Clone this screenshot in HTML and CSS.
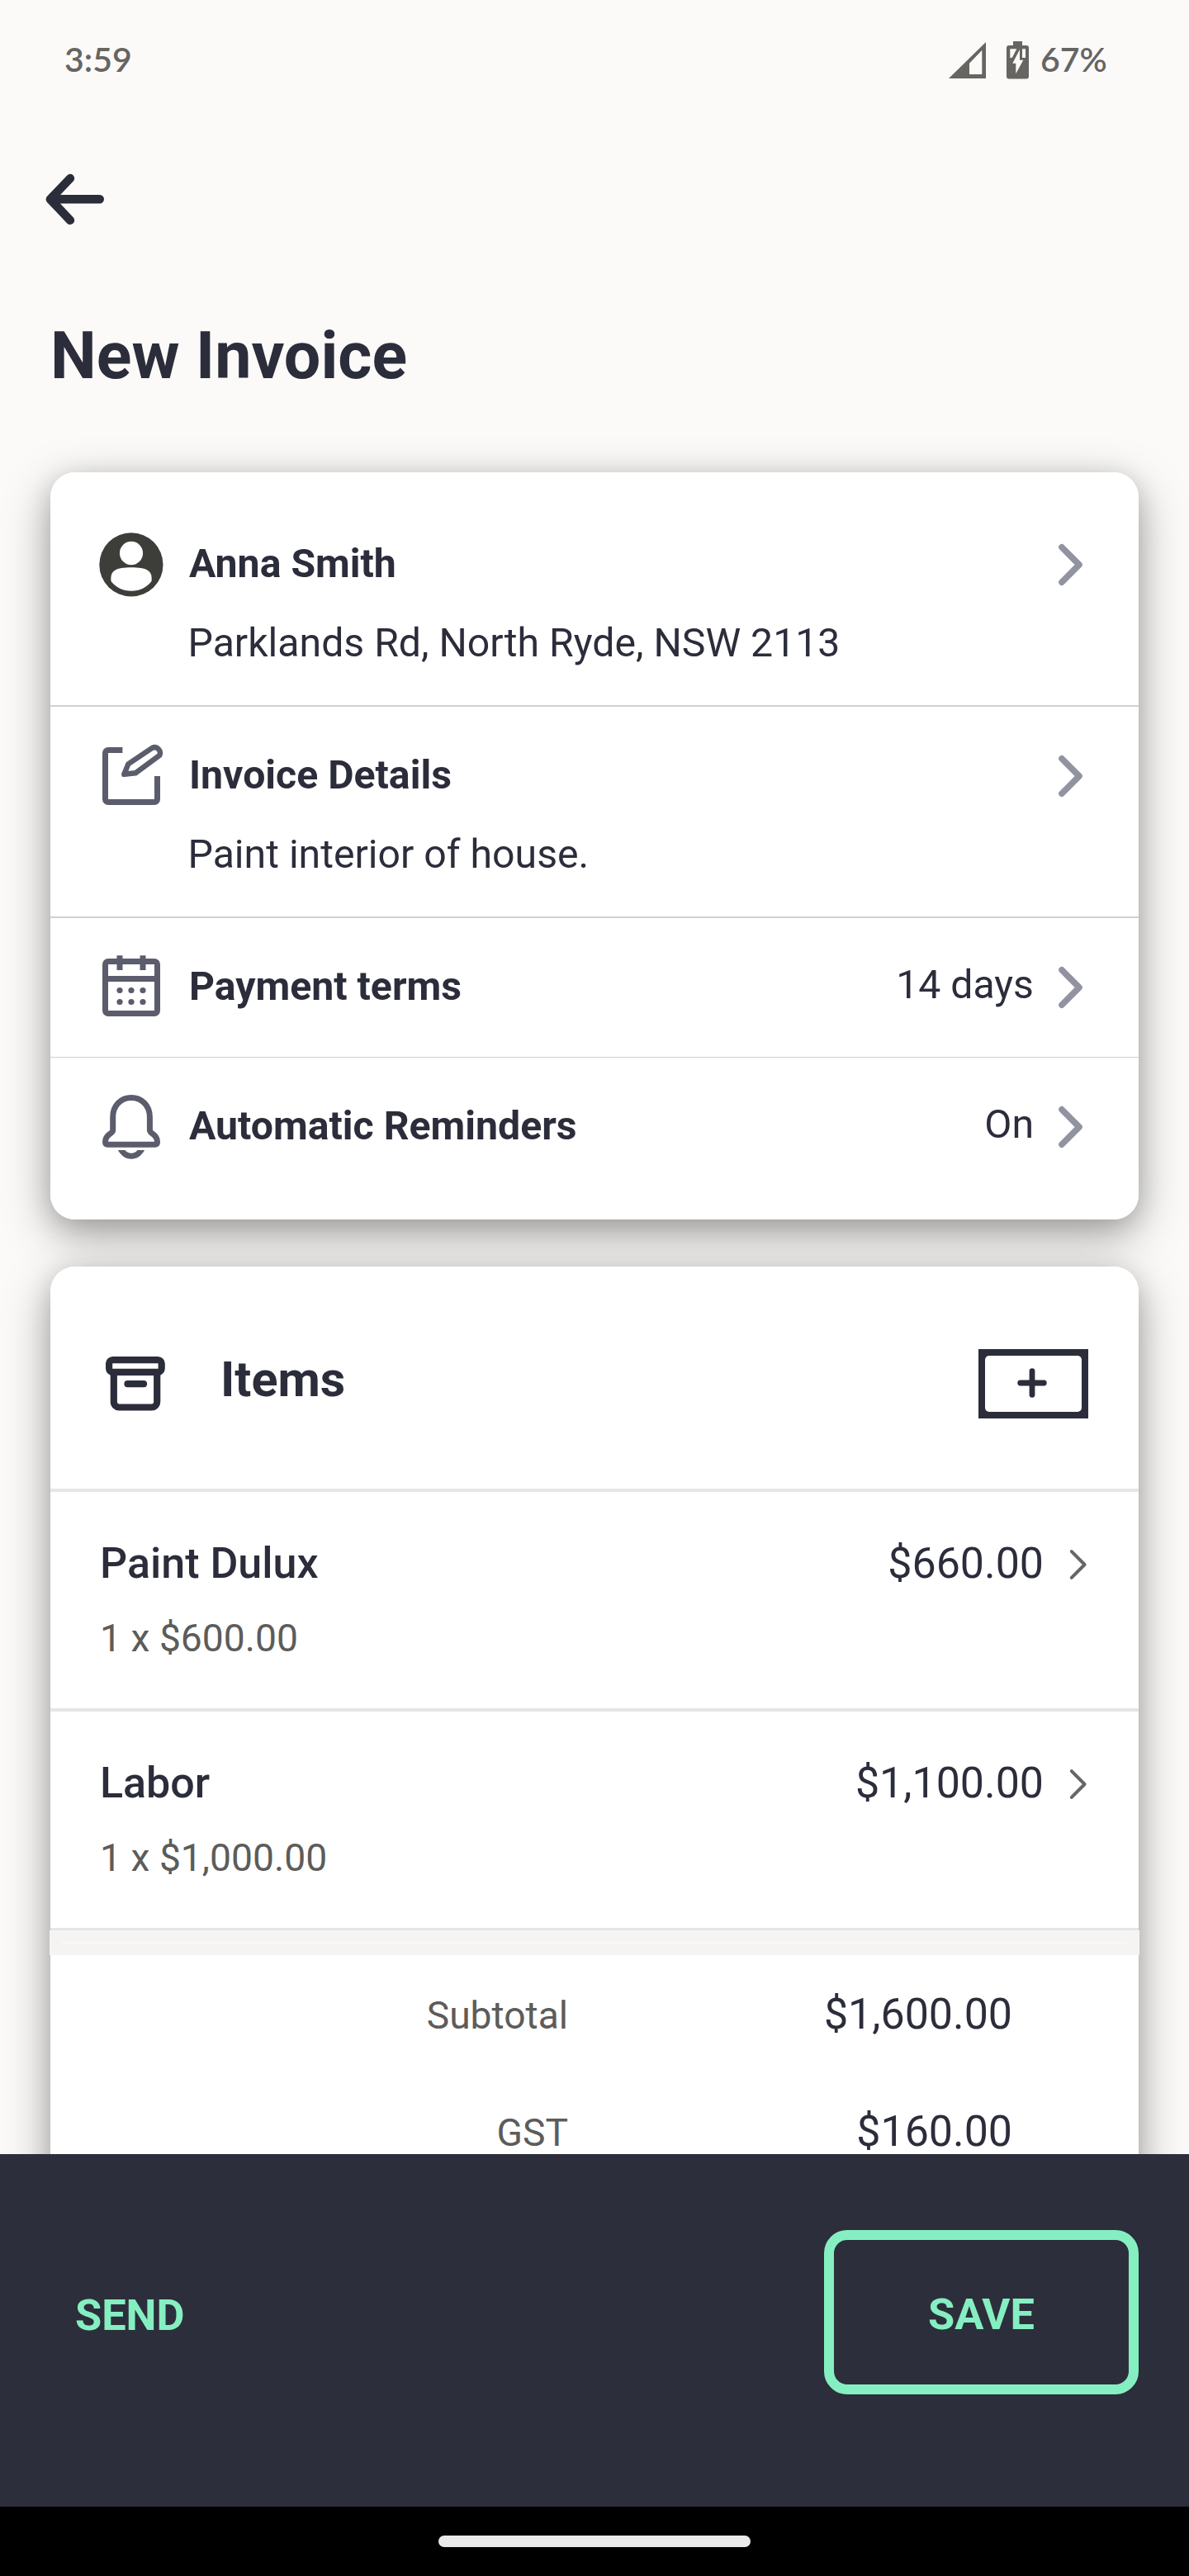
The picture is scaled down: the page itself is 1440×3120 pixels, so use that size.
FILE: index.html
```html
<!DOCTYPE html>
<html lang="en">
<head>
<meta charset="utf-8">
<title>New Invoice</title>
<link rel="stylesheet" href="styles.css">
</head>
<body>
<svg class="defs" width="0" height="0" aria-hidden="true">
  <symbol id="chevron" viewBox="0 0 40 60"><path d="M9 8.8L30 30L9 51.2" fill="none" stroke="#9293a1" stroke-width="7.6" stroke-linecap="round" stroke-linejoin="round"/></symbol>
  <symbol id="chevron-thin" viewBox="0 0 28 44"><path d="M5.8 6.2L21.6 22L5.8 37.8" fill="none" stroke="#666" stroke-width="4" stroke-linecap="round" stroke-linejoin="round"/></symbol>
</svg>
<div class="screen">
  <main class="content">
    <div class="status">
      <span class="clock">3:59</span>
      <div class="status-right">
        <svg class="signal" width="45" height="44" viewBox="0 0 45 44"><path fill="#666562" fill-rule="evenodd" d="M0 44H45V0ZM25 25.7L40.3 9.7V39H25Z"/></svg>
        <svg class="battery" width="28" height="46" viewBox="0 0 28 46"><path fill="#666562" d="M8 0h11v5h5a3 3 0 0 1 3 3v34.500a3 3 0 0 1-3 3H3a3 3 0 0 1-3-3V8a3 3 0 0 1 3-3h5z"/><path fill="#fbfaf8" d="M4.300 9.300H12.300L6.700 20H4.300zM19 9.300h4V20h-4zM16 10V22.700H20.300L11.300 39.300V26.700H7.300z"/></svg>
        <span class="percent">67%</span>
      </div>
    </div>
    <svg class="back" width="80" height="70" viewBox="0 0 80 70"><path d="M69.800 35.300H10M34 10L9.800 35.300L34 60.800" fill="none" stroke="#2c2d3b" stroke-width="10.400" stroke-linecap="round" stroke-linejoin="round"/></svg>
    <h1 class="title">New Invoice</h1>

    <section class="card details">
      <div class="row">
        <svg class="icon" width="80" height="80" viewBox="0 0 80 80"><circle cx="39.900" cy="39.900" r="38.600" fill="#3d3d3a"/><ellipse cx="40" cy="26" rx="14.100" ry="14.300" fill="#fff"/><path fill="#fff" d="M15.500 60C14 47 21.500 43.300 40 43.300S66 47 64.500 60C58.500 67.500 50.500 71.700 40 71.700S21.500 67.500 15.500 60Z"/></svg>
        <div class="text">
          <div class="label">Anna Smith</div>
          <div class="sub">Parklands Rd, North Ryde, NSW 2113</div>
        </div>
        <svg class="chev" width="40" height="60"><use href="#chevron"/></svg>
      </div>
      <div class="row">
        <svg class="icon" width="80" height="80" viewBox="0 0 80 80"><g fill="none" stroke="#5b5c6c" stroke-width="7"><path d="M29.400 8.500H12a3.500 3.500 0 0 0-3.500 3.500V68a3.500 3.500 0 0 0 3.500 3.500H68a3.500 3.500 0 0 0 3.500-3.500V40"/><path stroke-width="6.400" stroke-linejoin="round" d="M31.300 37.800L36.300 25.400L65.300 5.900A6.700 6.700 0 0 1 74.200 14.900L45 36.300Z"/></g></svg>
        <div class="text">
          <div class="label">Invoice Details</div>
          <div class="sub">Paint interior of house.</div>
        </div>
        <svg class="chev" width="40" height="60"><use href="#chevron"/></svg>
      </div>
      <div class="row">
        <svg class="icon" width="80" height="80" viewBox="0 0 80 80"><g fill="none" stroke="#5b5c6c" stroke-width="7"><rect x="8.500" y="8.500" width="63" height="63" rx="3.500"/><path d="M8.500 29.500H71.500M26 1.300V19M54 1.300V19"/></g><g fill="#5b5c6c"><circle cx="26" cy="43.500" r="3.600"/><circle cx="40" cy="43.500" r="3.600"/><circle cx="54" cy="43.500" r="3.600"/><circle cx="26" cy="57.500" r="3.600"/><circle cx="40" cy="57.500" r="3.600"/><circle cx="54" cy="57.500" r="3.600"/></g></svg>
        <div class="text"><div class="label">Payment terms</div></div>
        <span class="value">14 days</span>
        <svg class="chev" width="40" height="60"><use href="#chevron"/></svg>
      </div>
      <div class="row">
        <svg class="icon" width="80" height="80" viewBox="0 0 80 80"><path fill="none" stroke="#5b5c6c" stroke-width="7" d="M17.700 28C17.700 13.500 28 4.500 40 4.500S62.400 13.500 62.400 28V44C62.400 48.500 71.500 48.500 71.500 58Q71.500 61.200 68.500 61.200H11.500Q8.500 61.200 8.500 58C8.500 48.500 17.700 48.500 17.700 44Z"/><path fill="#5b5c6c" d="M23.800 68C28 75 33 78.700 40 78.700S52 75 56.200 68H47.500C45.500 70.500 43 71.700 40 71.700S34.500 70.500 32.500 68Z"/></svg>
        <div class="text"><div class="label">Automatic Reminders</div></div>
        <span class="value">On</span>
        <svg class="chev" width="40" height="60"><use href="#chevron"/></svg>
      </div>
    </section>

    <section class="card items">
      <header class="items-head">
        <svg width="80" height="80" viewBox="0 0 80 80"><g fill="none" stroke="#2c2d3b" stroke-width="8.200"><rect x="8.100" y="11.100" width="63.600" height="14.800" rx="4.500"/><path d="M13.800 26V62a6.500 6.500 0 0 0 6.500 6.500H59.700a6.500 6.500 0 0 0 6.500-6.500V26"/><path stroke-linecap="round" d="M30.500 40.200H50"/></g></svg>
        <h2 class="items-title">Items</h2>
        <button class="add" aria-label="Add item"><span class="add-face"><svg width="40" height="40" viewBox="0 0 40 40"><path d="M5.700 19H34.300M20 4.700V33.300" fill="none" stroke="#2c2d3b" stroke-width="6.800" stroke-linecap="round"/></svg></span></button>
      </header>
      <div class="item">
        <div class="item-text">
          <div class="item-name">Paint Dulux</div>
          <div class="item-sub">1 x $600.00</div>
        </div>
        <span class="amount">$660.00</span>
        <svg class="item-chev" width="28" height="44"><use href="#chevron-thin"/></svg>
      </div>
      <div class="item last">
        <div class="item-text">
          <div class="item-name">Labor</div>
          <div class="item-sub">1 x $1,000.00</div>
        </div>
        <span class="amount">$1,100.00</span>
        <svg class="item-chev" width="28" height="44"><use href="#chevron-thin"/></svg>
      </div>
      <div class="band"></div>
      <div class="total"><span class="total-label">Subtotal</span><span class="total-value">$1,600.00</span></div>
      <div class="total"><span class="total-label">GST</span><span class="total-value">$160.00</span></div>
    </section>
  </main>
  <footer class="actions">
    <button class="send">SEND</button>
    <button class="save">SAVE</button>
  </footer>
  <div class="nav"><div class="handle"></div></div>
</div>
</body>
</html>
```
FILE: styles.css
```css
* { box-sizing: border-box; }

body {
  margin: 0;
  background: #fbfaf8;
  font-family: Roboto, "Liberation Sans", sans-serif;
  color: #2c2d3b;
}

h1, h2 { margin: 0; }

svg { display: block; flex: none; }

button {
  border: 0;
  padding: 0;
  background: none;
  font: inherit;
  color: inherit;
}

.defs { position: absolute; }

.screen {
  width: 1440px;
  height: 3120px;
  display: flex;
  flex-direction: column;
  overflow: hidden;
}

.content {
  height: 2609px;
  flex: none;
  overflow: hidden;
  isolation: isolate;
}

/* Status bar */
.status {
  height: 143px;
  padding: 0 96px 0 78px;
  display: flex;
  align-items: center;
  justify-content: space-between;
  font-family: Lato, "Liberation Sans", sans-serif;
  font-size: 41px;
  font-weight: 600;
  line-height: 60px;
  color: #666562;
}

.status-right { display: flex; align-items: center; }
.signal { margin: 3px 25px 0 0; }
.battery { margin: 3px 13px 0 0; }
.percent { width: 84px; white-space: nowrap; }

/* Page heading */
.back { margin: 63px 0 0 51px; }

.title {
  margin: 107px 61px 93px;
  font-size: 79px;
  font-weight: 700;
  line-height: 96px;
}

/* Cards */
.card {
  position: relative;
  width: 1318px;
  margin-left: 61px;
  border-radius: 30px;
  background: #fff;
}

.card::before {
  content: "";
  position: absolute;
  inset: 0;
  z-index: -1;
  border-radius: 30px;
  box-shadow: 0 18px 56px rgba(0, 0, 0, .34), 0 7px 30px rgba(0, 0, 0, .13);
}

.details { height: 905px; padding-top: 28px; }

.row {
  display: flex;
  align-items: flex-start;
  padding: 34px 62px 28px 58px;
  border-bottom: 2px solid #cfcfd7;
  font-size: 48.2px;
  line-height: 96px;
}

.row:nth-child(3) { padding-bottom: 38px; border-bottom-width: 1px; }
.row:nth-child(4) { border-bottom: 0; }

.icon { margin-top: 10px; }
.text { flex: 1; margin: 1px 0 -1px 30px; }
.label { font-weight: 700; }
.sub { margin-left: -1.500px; }
.value { margin: -1px 25px 0 0; }
.chev { margin-top: 20px; }

.items { margin-top: 57px; }

.items-head {
  height: 273px;
  padding: 15px 61px 0 63px;
  display: flex;
  align-items: center;
  border-bottom: 4px solid #e6e6e6;
}

.items-title {
  flex: 1;
  margin: 0 0 11px 63px;
  font-size: 59.250px;
  font-weight: 700;
  line-height: 80px;
}

.add {
  width: 133px;
  height: 84px;
  padding: 8px;
  background: #2c2d3b;
}

.add-face {
  height: 100%;
  display: flex;
  align-items: center;
  justify-content: center;
  padding-right: 3px;
  border-radius: 5px;
  background: #fff;
}

.item {
  height: 266px;
  padding: 41.500px 59px 0 60px;
  display: flex;
  align-items: flex-start;
  border-bottom: 4px solid #e6e6e6;
  line-height: 90px;
}

.item.last { height: 265px; border-bottom-width: 3px; }
.item-text { flex: 1; }
.item-name { font-size: 52px; font-weight: 500; }
.item-sub { font-size: 46.250px; color: #5c5c5a; }
.amount { font-size: 51.900px; }
.item-chev { margin: 24px 0 0 28px; }

.band {
  height: 30px;
  margin: 0 -1px;
  padding: 14px 15px 0;
  background: #f5f4f2;
}

.band::after {
  content: "";
  display: block;
  height: 2px;
  background: #faf9f8;
}

.total {
  height: 142px;
  display: grid;
  grid-template-columns: 627px 1fr;
  align-items: baseline;
  padding: 1px 153px 0 0;
  line-height: 142px;
  text-align: right;
}

.total-label { font-size: 46.200px; color: #5c5c5a; }
.total-value { font-size: 51.900px; }

/* Bottom bar */
.actions {
  height: 427px;
  flex: none;
  padding: 92px 61px 0 91px;
  display: flex;
  align-items: flex-start;
  justify-content: space-between;
  background: #2d2e3b;
  color: #85efc2;
  font-size: 52.300px;
  font-weight: 700;
}

.send { padding-top: 4px; line-height: 199px; }

.save {
  width: 381px;
  height: 199px;
  padding-top: 5px;
  border: 12px solid #85efc2;
  border-radius: 28px;
}

.nav {
  height: 84px;
  flex: none;
  padding-top: 35px;
  background: #000;
}

.handle {
  width: 378px;
  height: 14px;
  margin: 0 auto;
  border-radius: 7px;
  background: #eaeaea;
}
```
